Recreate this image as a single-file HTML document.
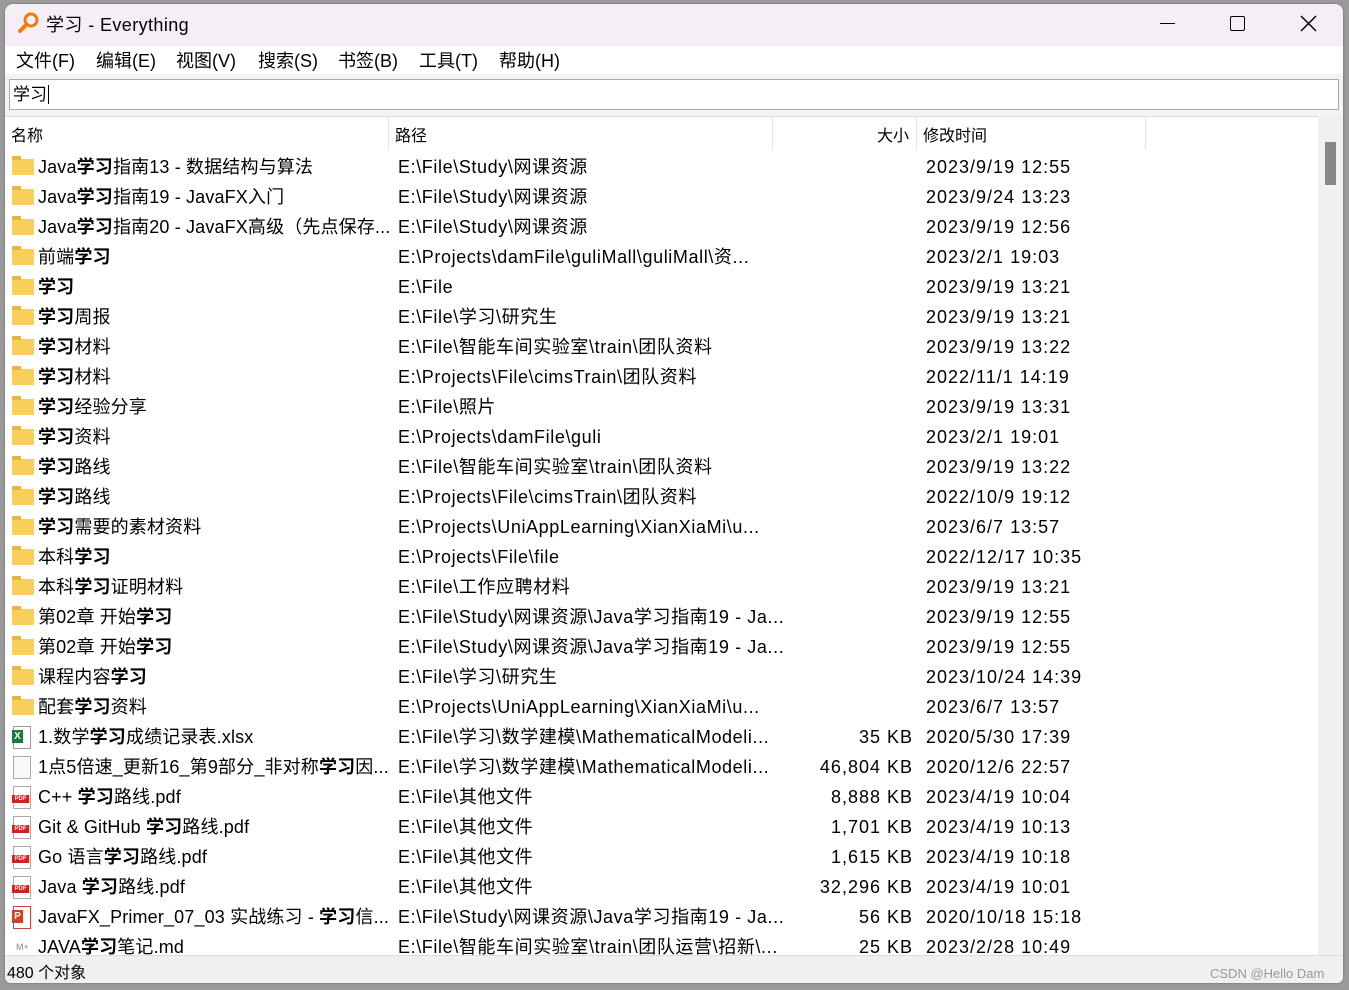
<!DOCTYPE html>
<html><head><meta charset="utf-8"><style>
body{margin:0;width:1349px;height:990px;background:#9a9a9a;position:relative;overflow:hidden;font-family:"Liberation Sans","Noto Sans CJK SC",sans-serif;color:#000}
.win{position:absolute;left:5px;top:4px;width:1338px;height:979px;background:#fff;border-radius:8px 8px 6px 6px;overflow:hidden;box-shadow:0 0 2px #666}
.title{position:absolute;left:0;top:0;width:100%;height:42px;background:#f5eef6}
.abs{position:absolute;white-space:nowrap}
.menu{top:43px;font-size:18px}
.row{position:absolute;left:0;height:30px;width:1313px;font-size:18px;line-height:30px}
.row span{position:absolute;white-space:nowrap}
.n{letter-spacing:0.15px}.p{letter-spacing:0.6px}.d{letter-spacing:1px}
b{font-weight:bold}
.fold{position:absolute;left:7px;top:7px;width:22px;height:16px;background:#f8cf5a;border-radius:1px}
.fold:before{content:"";position:absolute;left:0;top:-3px;width:9px;height:4px;background:#e8b540;border-radius:1px 1px 0 0}
.pdf{position:absolute;left:8px;top:4px;width:16px;height:21px;background:#fff;border:1px solid #aaa}
.pdf i{position:absolute;left:-2px;top:8px;width:17px;height:8px;background:#d42020;color:#fff;font-size:6px;line-height:8px;font-style:normal;text-align:center;font-weight:bold}
</style></head><body>
<div class="win">
<div class="title"></div>
<svg class="abs" style="left:12px;top:7px" width="24" height="24" viewBox="0 0 24 24"><circle cx="14" cy="9" r="6" fill="none" stroke="#f07a10" stroke-width="3"/><line x1="9.5" y1="13.5" x2="3" y2="20" stroke="#f07a10" stroke-width="4" stroke-linecap="round"/></svg>
<div class="abs" style="left:41px;top:7px;font-size:18px;letter-spacing:0.4px">学习 - Everything</div>
<div class="abs" style="left:1155px;top:19px;width:15px;height:1px;background:#000"></div>
<div class="abs" style="left:1225px;top:12px;width:13px;height:13px;border:1.5px solid #000;border-radius:2px"></div>
<svg class="abs" style="left:1295px;top:11px" width="17" height="17"><path d="M1 1L16 16M16 1L1 16" stroke="#000" stroke-width="1.5"/></svg>
<div class="abs menu" style="left:11px">文件(F)</div>
<div class="abs menu" style="left:91px">编辑(E)</div>
<div class="abs menu" style="left:171px">视图(V)</div>
<div class="abs menu" style="left:253px">搜索(S)</div>
<div class="abs menu" style="left:333px">书签(B)</div>
<div class="abs menu" style="left:414px">工具(T)</div>
<div class="abs menu" style="left:494px">帮助(H)</div>
<div class="abs" style="left:0;top:70px;width:100%;height:42px;background:#f3f3f3"></div>
<div class="abs" style="left:4px;top:75px;border:1px solid #aaa;background:#fff;font-size:17px;line-height:29px;padding-left:3px;box-sizing:border-box;width:1330px;height:31px">学习<span style="border-left:1px solid #000;margin-left:1px"></span></div>
<div class="abs" style="left:0;top:112px;width:1313px;height:34px;border-top:1px solid #ddd;background:#fff"></div>
<div class="abs" style="left:383px;top:113px;width:1px;height:33px;background:#e3e3e3"></div>
<div class="abs" style="left:767px;top:113px;width:1px;height:33px;background:#e3e3e3"></div>
<div class="abs" style="left:911px;top:113px;width:1px;height:33px;background:#e3e3e3"></div>
<div class="abs" style="left:1140px;top:113px;width:1px;height:33px;background:#e3e3e3"></div>
<div class="abs" style="left:6px;top:118px;font-size:16px">名称</div>
<div class="abs" style="left:390px;top:118px;font-size:16px">路径</div>
<div class="abs" style="left:872px;top:118px;font-size:16px">大小</div>
<div class="abs" style="left:918px;top:118px;font-size:16px">修改时间</div>
<div class="abs" style="left:1313px;top:112px;width:25px;height:839px;background:#f0f0f0"></div>
<div class="abs" style="left:1320px;top:138px;width:11px;height:43px;background:#888"></div>
<div id="rows"></div>
<div class="abs" style="left:0;top:951px;width:100%;height:28px;background:#f0f0f0;border-top:1px solid #ddd"></div>
<div class="abs" style="left:2px;top:955px;font-size:16px">480 个对象</div>
<div class="abs" style="left:1205px;top:962px;font-size:13px;color:#999">CSDN @Hello Dam</div>
</div>
<script>
var F='fold',R=[
[F,'Java<b>学习</b>指南13 - 数据结构与算法','E:\\File\\Study\\网课资源','','2023/9/19 12:55'],
[F,'Java<b>学习</b>指南19 - JavaFX入门','E:\\File\\Study\\网课资源','','2023/9/24 13:23'],
[F,'Java<b>学习</b>指南20 - JavaFX高级（先点保存...','E:\\File\\Study\\网课资源','','2023/9/19 12:56'],
[F,'前端<b>学习</b>','E:\\Projects\\damFile\\guliMall\\guliMall\\资...','','2023/2/1 19:03'],
[F,'<b>学习</b>','E:\\File','','2023/9/19 13:21'],
[F,'<b>学习</b>周报','E:\\File\\学习\\研究生','','2023/9/19 13:21'],
[F,'<b>学习</b>材料','E:\\File\\智能车间实验室\\train\\团队资料','','2023/9/19 13:22'],
[F,'<b>学习</b>材料','E:\\Projects\\File\\cimsTrain\\团队资料','','2022/11/1 14:19'],
[F,'<b>学习</b>经验分享','E:\\File\\照片','','2023/9/19 13:31'],
[F,'<b>学习</b>资料','E:\\Projects\\damFile\\guli','','2023/2/1 19:01'],
[F,'<b>学习</b>路线','E:\\File\\智能车间实验室\\train\\团队资料','','2023/9/19 13:22'],
[F,'<b>学习</b>路线','E:\\Projects\\File\\cimsTrain\\团队资料','','2022/10/9 19:12'],
[F,'<b>学习</b>需要的素材资料','E:\\Projects\\UniAppLearning\\XianXiaMi\\u...','','2023/6/7 13:57'],
[F,'本科<b>学习</b>','E:\\Projects\\File\\file','','2022/12/17 10:35'],
[F,'本科<b>学习</b>证明材料','E:\\File\\工作应聘材料','','2023/9/19 13:21'],
[F,'第02章 开始<b>学习</b>','E:\\File\\Study\\网课资源\\Java学习指南19 - Ja...','','2023/9/19 12:55'],
[F,'第02章 开始<b>学习</b>','E:\\File\\Study\\网课资源\\Java学习指南19 - Ja...','','2023/9/19 12:55'],
[F,'课程内容<b>学习</b>','E:\\File\\学习\\研究生','','2023/10/24 14:39'],
[F,'配套<b>学习</b>资料','E:\\Projects\\UniAppLearning\\XianXiaMi\\u...','','2023/6/7 13:57'],
['x','1.数学<b>学习</b>成绩记录表.xlsx','E:\\File\\学习\\数学建模\\MathematicalModeli...','35 KB','2020/5/30 17:39'],
['f','1点5倍速_更新16_第9部分_非对称<b>学习</b>因...','E:\\File\\学习\\数学建模\\MathematicalModeli...','46,804 KB','2020/12/6 22:57'],
['p','C++ <b>学习</b>路线.pdf','E:\\File\\其他文件','8,888 KB','2023/4/19 10:04'],
['p','Git &amp; GitHub <b>学习</b>路线.pdf','E:\\File\\其他文件','1,701 KB','2023/4/19 10:13'],
['p','Go 语言<b>学习</b>路线.pdf','E:\\File\\其他文件','1,615 KB','2023/4/19 10:18'],
['p','Java <b>学习</b>路线.pdf','E:\\File\\其他文件','32,296 KB','2023/4/19 10:01'],
['ppt','JavaFX_Primer_07_03 实战练习 - <b>学习</b>信...','E:\\File\\Study\\网课资源\\Java学习指南19 - Ja...','56 KB','2020/10/18 15:18'],
['m','JAVA<b>学习</b>笔记.md','E:\\File\\智能车间实验室\\train\\团队运营\\招新\\...','25 KB','2023/2/28 10:49']];
var h='';R.forEach(function(r,i){var ic='';
if(r[0]==F)ic='<div class="fold"></div>';
else if(r[0]=='p')ic='<div class="pdf"><i>PDF</i></div>';
else if(r[0]=='x')ic='<div class="pdf" style="border-color:#999"><i style="background:#1d7a3e;width:11px;height:13px;top:3px;font-size:10px;line-height:13px">X</i></div>';
else if(r[0]=='ppt')ic='<div class="pdf" style="border-color:#c44"><i style="background:#c8452a;width:11px;height:13px;top:3px;font-size:10px;line-height:13px">P</i></div>';
else if(r[0]=='m')ic='<span style="left:11px;top:0;font-size:9px;color:#888">M+</span>';
else ic='<div class="pdf" style="background:#f8f8f8"></div>';
h+='<div class="row" style="top:'+(148+i*30)+'px">'+ic+'<span class="n" style="left:33px">'+r[1]+'</span><span class="p" style="left:393px">'+r[2]+'</span><span class="d" style="right:405px">'+r[3]+'</span><span class="d" style="left:921px">'+r[4]+'</span></div>';});
document.getElementById('rows').innerHTML=h;
</script>
</body></html>
